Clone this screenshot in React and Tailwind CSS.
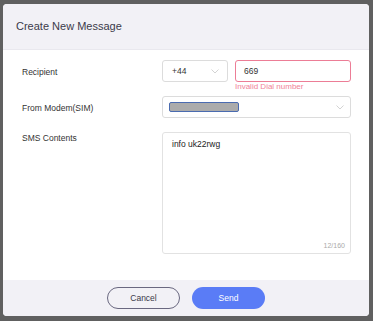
import React from "react";

export default function App() {
  const font = { fontFamily: '"Liberation Sans", Arial, sans-serif' };
  return (
    <div className="w-[373px] h-[321px] bg-[#606060] pt-[4px] pl-[3px]" style={font}>
      <div className="w-[366px] h-[312px] rounded-[4px] overflow-hidden bg-white flex flex-col">
        <div className="h-[46px] bg-[#f2f1f6] border-b border-[#e9e8ee] flex items-center pl-[13px] text-[11px] text-[#3b3a4a]">
          Create New Message
        </div>
        <div className="flex-1 pt-[10px] pl-[19px] text-[8.5px] text-[#333]">
          <div className="flex">
            <div className="w-[140px] pt-[6px]">Recipient</div>
            <div className="w-[66px] h-[22px] border border-[#dcdcdc] rounded-[3px] flex items-center justify-between pl-[9px] pr-[8px]">
              <span className="text-[#333]">+44</span>
              <svg width="8" height="5" viewBox="0 0 8 5"><path d="M0.5 0.5 L4 4 L7.5 0.5" fill="none" stroke="#c8c8c8" strokeWidth="0.8" /></svg>
            </div>
            <div className="ml-[7px] flex flex-col">
              <div className="w-[116px] h-[22px] border border-[#ec7d96] rounded-[3px] flex items-center pl-[8px]">669</div>
              <div className="text-[8px] text-[#f08399] leading-[10px] mt-[0px]">Invalid Dial number</div>
            </div>
          </div>
          <div className="flex mt-[4px]">
            <div className="w-[140px] pt-[6px]">From Modem(SIM)</div>
            <div className="w-[189px] h-[22px] border border-[#dcdcdc] rounded-[3px] flex items-center justify-between pl-[6px] pr-[6px]">
              <div className="w-[70px] h-[10px] bg-[#ababab] border border-[#4a6bb0] rounded-[2px]"></div>
              <svg width="8" height="5" viewBox="0 0 8 5"><path d="M0.5 0.5 L4 4 L7.5 0.5" fill="none" stroke="#c8c8c8" strokeWidth="0.8" /></svg>
            </div>
          </div>
          <div className="flex mt-[14px]">
            <div className="w-[140px] pt-[0px]">SMS Contents</div>
            <div className="w-[189px] h-[122px] border border-[#e2e2e2] rounded-[3px] relative pl-[9px] pt-[5px]">
              <div className="text-[#222]">info uk22rwg</div>
              <div className="absolute right-[5px] bottom-[2px] text-[7px] text-[#aaa]">12/160</div>
            </div>
          </div>
        </div>
        <div className="h-[36px] bg-[#f2f1f6] flex items-center justify-center gap-[12px] pb-[0px]">
          <button className="w-[73px] h-[22px] rounded-full border border-[#6a6880] bg-transparent text-[8.5px] text-[#3b3a4a]">Cancel</button>
          <button className="w-[73px] h-[22px] rounded-full bg-[#5a7cf6] text-[8.5px] text-white">Send</button>
        </div>
      </div>
    </div>
  );
}
